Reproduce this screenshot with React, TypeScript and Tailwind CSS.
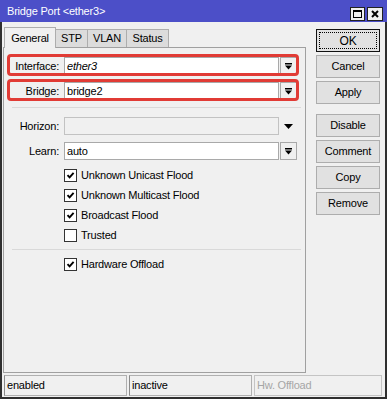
import React from "react"

function DropGlyph() {
  return (
    <svg width="7" height="7" viewBox="0 0 7 7">
      <rect x="0" y="0" width="7" height="1.5" fill="#000" />
      <polygon points="0,2.5 7,2.5 3.5,6.5" fill="#000" />
    </svg>
  )
}

function CheckBox({ checked, label }: { checked: boolean; label: string }) {
  return (
    <div className="flex items-center h-[13px] pl-[60px]">
      <div className="w-[13px] h-[13px] border border-[#333] bg-white flex items-center justify-center">
        {checked && (
          <svg width="9" height="9" viewBox="0 0 9 9">
            <path d="M1.5 4.2 L3.6 6.4 L7.6 1.8" stroke="#000" strokeWidth="1.9" fill="none" />
          </svg>
        )}
      </div>
      <span className="ml-[4px] leading-none">{label}</span>
    </div>
  )
}

function Field({
  label,
  value,
  italic,
  disabled,
  arrowOnly,
  marked,
}: {
  label: string
  value?: string
  italic?: boolean
  disabled?: boolean
  arrowOnly?: boolean
  marked?: boolean
}) {
  return (
    <div className="relative flex items-center h-[18px]">
      <div className="w-[55px] text-right leading-none">{label}</div>
      <div
        className={
          "ml-[5px] w-[215px] h-[18px] border flex items-center pl-[2px] leading-none " +
          (disabled ? "bg-[#f0f0f0] border-[#c2c2c2]" : "bg-white border-[#a9a9a9]") +
          (italic ? " italic" : "")
        }
      >
        {value}
      </div>
      {arrowOnly ? (
        <div className="ml-[1px] w-[17px] h-[18px] flex items-center justify-center">
          <svg width="9" height="5" viewBox="0 0 9 5">
            <polygon points="0,0 9,0 4.5,5" fill="#000" />
          </svg>
        </div>
      ) : (
        <div className="ml-[1px] w-[17px] h-[18px] border border-[#a9a9a9] bg-[#f0f0f0] flex items-center justify-center">
          <DropGlyph />
        </div>
      )}
      {/* red highlight drawn over the row */}
      {marked && (
        <div className="absolute left-[3px] top-[-3px] w-[292px] h-[22px] border-[3px] border-[#e13b35] rounded-[4px] pointer-events-none" />
      )}
    </div>
  )
}

function Btn({ children, def }: { children: React.ReactNode; def?: boolean }) {
  if (def) {
    return (
      <div className="w-[64px] h-[23px] border border-[#111] bg-[#e1e1e1] p-[2px]">
        <div className="w-full h-full border border-dotted border-[#000] flex items-center justify-center leading-none text-[12px]">
          {children}
        </div>
      </div>
    )
  }
  return (
    <div className="w-[64px] h-[23px] border border-[#adadad] bg-[#e1e1e1] flex items-center justify-center leading-none">
      {children}
    </div>
  )
}

export default function App() {
  const tabs = [
    { name: "STP", w: "w-[33px]" },
    { name: "VLAN", w: "w-[40px]" },
    { name: "Status", w: "w-[43px]" },
  ]

  return (
    <div className="w-[387px] h-[399px] flex flex-col bg-[#f0f0f0] text-[11px] tracking-[-0.2px] text-[#000] font-['Liberation_Sans',Arial,sans-serif]">
      {/* Title bar */}
      <div className="h-[22px] bg-[#4c4fc8] flex items-center pl-[7px] pr-[4px]">
        <span className="text-white leading-none">Bridge Port &lt;ether3&gt;</span>
        <div className="ml-auto flex gap-[2px] mt-[5px]">
          <div className="w-[15px] h-[14px] bg-[#f0f0f0] border border-[#222] flex items-center justify-center">
            <div className="w-[9px] h-[8px] border border-[#000] border-t-2" />
          </div>
          <div className="w-[16px] h-[14px] bg-[#f0f0f0] border border-[#222] flex items-center justify-center">
            <svg width="8" height="8" viewBox="0 0 8 8">
              <path d="M1 1 L7 7 M7 1 L1 7" stroke="#000" strokeWidth="2" />
            </svg>
          </div>
        </div>
      </div>

      {/* Body */}
      <div className="flex-1 flex flex-col border-x-2 border-b-2 border-[#2f2f2f]">
        <div className="flex pt-[5px]">
          {/* Left: tabs + panel */}
          <div className="ml-[1px] w-[303px] flex flex-col">
            <div className="flex items-end h-[20px] pl-[1px]">
              <div className="relative z-10 -mb-px w-[52px] h-[21px] bg-[#f0f0f0] border border-b-0 border-[#adadad] flex items-center justify-center leading-none">
                General
              </div>
              {tabs.map((t) => (
                <div
                  key={t.name}
                  className={t.w + " h-[18px] -ml-px bg-[#dcdcdc] border border-b-0 border-[#adadad] flex items-center justify-center leading-none"}
                >
                  {t.name}
                </div>
              ))}
            </div>

            <div className="h-[326px] border border-[#a0a0a0] flex flex-col pt-[9px]">
              <Field label="Interface:" value="ether3" italic marked />
              <div className="mt-[7px]">
                <Field label="Bridge:" value="bridge2" marked />
              </div>
              <div className="mt-[7px] ml-[8px] mr-[4px] border-t border-[#d9d9d9]" />
              <div className="mt-[9px]">
                <Field label="Horizon:" disabled arrowOnly />
              </div>
              <div className="mt-[7px]">
                <Field label="Learn:" value="auto" />
              </div>
              <div className="mt-[9px] flex flex-col gap-[7px]">
                <CheckBox checked label="Unknown Unicast Flood" />
                <CheckBox checked label="Unknown Multicast Flood" />
                <CheckBox checked label="Broadcast Flood" />
                <CheckBox checked={false} label="Trusted" />
              </div>
              <div className="mt-[7px] ml-[8px] mr-[4px] border-t border-[#d9d9d9]" />
              <div className="mt-[8px]">
                <CheckBox checked label="Hardware Offload" />
              </div>
            </div>
          </div>

          {/* Right: buttons */}
          <div className="ml-[10px] mt-[2px] flex flex-col gap-[3px]">
            <Btn def>OK</Btn>
            <Btn>Cancel</Btn>
            <Btn>Apply</Btn>
            <div className="mt-[7px]">
              <Btn>Disable</Btn>
            </div>
            <Btn>Comment</Btn>
            <Btn>Copy</Btn>
            <Btn>Remove</Btn>
          </div>
        </div>

        {/* Status bar */}
        <div className="mt-[2px] ml-[2px] flex gap-[2px] h-[21px]">
          <div className="w-[123px] border border-[#b0b0b0] border-l-[#8a8a8a] flex items-center pl-[2px] leading-none">
            enabled
          </div>
          <div className="w-[123px] border border-[#b0b0b0] border-l-[#8a8a8a] flex items-center pl-[2px] leading-none">
            inactive
          </div>
          <div className="w-[128px] border border-[#c4c4c4] flex items-center pl-[2px] leading-none text-[#a6a6a6]">
            Hw. Offload
          </div>
        </div>
      </div>
    </div>
  )
}
